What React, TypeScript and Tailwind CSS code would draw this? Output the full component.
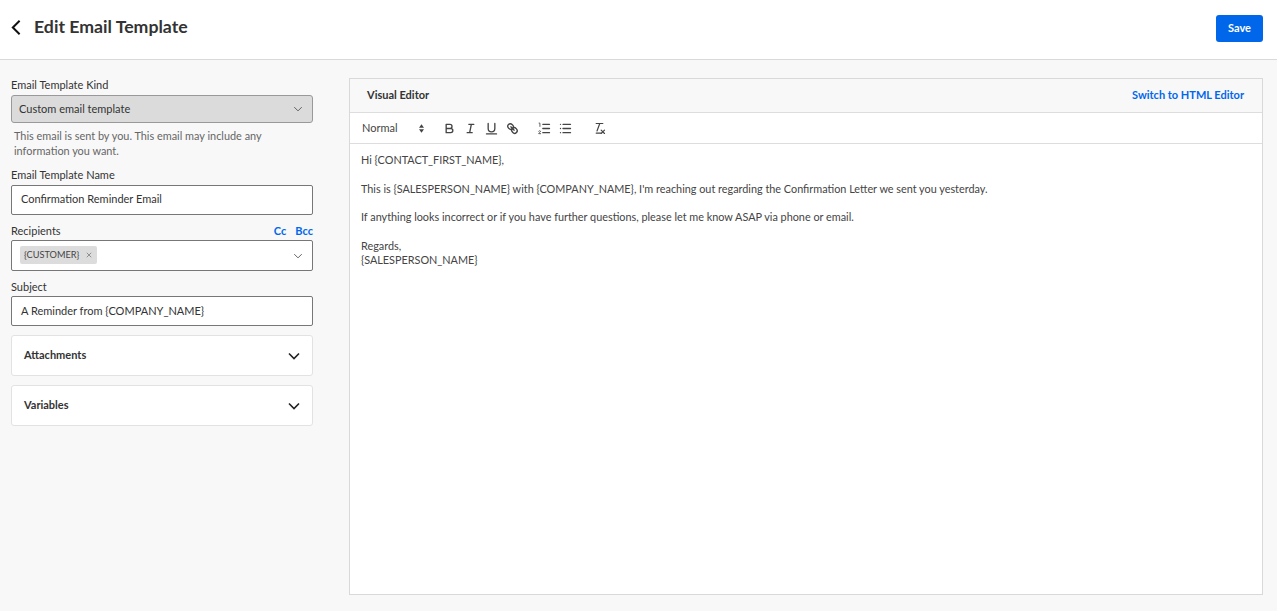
import React from "react";

function Caret({ className }: { className: string }) {
  return (
    <svg viewBox="0 0 12 8" fill="none" stroke="currentColor" className={className}>
      <path d="M1 1.5l5 5 5-5" />
    </svg>
  );
}

function Collapse({ label }: { label: string }) {
  return (
    <div className="flex h-[41px] items-center justify-between rounded-[3px] border border-[#e2e2e2] bg-white pl-[12px] pr-[12px]">
      <span className="pb-[1px] text-[11px] font-bold text-[#333]">{label}</span>
      <Caret className="h-[8px] w-[12px] stroke-[1.6] text-[#222]" />
    </div>
  );
}

// toolbar icons, 18 unit grid
function Tool({ className, children }: { className: string; children: React.ReactNode }) {
  return (
    <svg viewBox="0 0 18 18" fill="none" stroke="#444" strokeWidth="1.6" strokeLinecap="round" strokeLinejoin="round" className={className}>
      {children}
    </svg>
  );
}

function Toolbar() {
  return (
    <div className="flex h-[31px] items-center border-b border-[#ddd] pl-[12px]">
      <span className="w-[57px] text-[11px] text-[#444]">Normal</span>
      <svg viewBox="0 0 6 10" className="h-[9px] w-[5px] fill-[#444]">
        <path d="M3 0l3 4H0zM3 10L0 6h6z" />
      </svg>
      <Tool className="ml-[18px] h-[15px] w-[15px]">
        <path d="M5 4h4.5a2.5 2.5 0 0 1 0 5H5zM5 9h5.5a2.5 2.5 0 0 1 0 5H5z" />
      </Tool>
      <Tool className="ml-[6px] h-[15px] w-[15px]">
        <path d="M7 4h6M5 14h6M8 14l2-10" />
      </Tool>
      <Tool className="ml-[6px] h-[15px] w-[15px]">
        <path d="M5 3v6a4 4 0 0 0 4 4 4 4 0 0 0 4-4V3M3 15.5h12" />
      </Tool>
      <Tool className="ml-[6px] h-[15px] w-[15px]">
        <path d="M7 7l4 4" />
        <path d="M8.9 4.58a3.48 3.48 0 0 1 .36 4.68 3.48 3.48 0 0 1-4.68-.36C3.19 7.5 2.04 6.4 4.22 4.22S7.5 3.19 8.9 4.58z" />
        <path d="M13.42 9.1a3.48 3.48 0 0 0-4.68-.36 3.48 3.48 0 0 0 .36 4.68c1.39 1.39 2.5 2.54 4.68.36s1.03-3.28-.36-4.68z" />
      </Tool>
      <Tool className="ml-[17px] h-[15px] w-[15px]">
        <path d="M7 4h8M7 9h8M7 14h8" />
        <path d="M2.5 2.5H3.5V6.5M2 12.2c.4-.8 2.4-.8 2.2.5-.1.7-2.2 1.6-2.2 2.5h2.4" strokeWidth="1" />
      </Tool>
      <Tool className="ml-[6px] h-[15px] w-[15px]">
        <path d="M6 4h9M6 9h9M6 14h9M3 4h.01M3 9h.01M3 14h.01" />
      </Tool>
      <Tool className="ml-[19px] h-[15px] w-[15px]">
        <path d="M5 3h8M6 12L9.35 3M11 11l4 4M15 11l-4 4M5 14.5h6" strokeWidth="1.4" />
      </Tool>
    </div>
  );
}

export default function App() {
  return (
    <div className="flex h-[611px] flex-col bg-[#f8f8f8] font-['Lato',sans-serif]">
      <header className="flex h-[60px] flex-none items-center justify-between border-b border-[#d9d9d9] bg-white pl-[11px] pr-[14px]">
        <div className="mb-[4px] flex items-center">
          <svg viewBox="0 0 11 18" fill="none" stroke="#111" strokeWidth="2.2" className="h-[17px] w-[10px]">
            <path d="M9.5 1.5L2 9l7.5 7.5" />
          </svg>
          <h1 className="ml-[13px] text-[17.7px] font-bold text-[#333]">Edit Email Template</h1>
        </div>
        <button className="mb-[2px] h-[27px] w-[47px] rounded-[3px] bg-[#0067ea] text-[11px] font-bold text-white">Save</button>
      </header>
      <div className="flex min-h-0 flex-1 pl-[11px] pr-[14px] pt-[18px]">
        <aside className="w-[302px] flex-none">
          <div className="h-[17px] text-[11px] leading-[14px] text-[#333]">Email Template Kind</div>
          <div className="flex h-[28px] items-center justify-between rounded-[3px] border border-[#999] bg-[#dbdbdb] pl-[7px] pr-[9px] text-[11px] text-[#333]">
            Custom email template
            <Caret className="h-[6px] w-[10px] stroke-[1.2] text-[#555]" />
          </div>
          <p className="ml-[3px] mt-[5px] h-[37px] w-[270px] text-[10.9px] leading-[15px] text-[#666]">
            This email is sent by you. This email may include any information you want.
          </p>
          <div className="h-[20px] text-[11px] leading-[19px] text-[#333]">Email Template Name</div>
          <div className="flex h-[30px] items-center rounded-[2px] border border-[#777] bg-white pb-[1px] pl-[9px] text-[11px] text-[#333]">Confirmation Reminder Email</div>
          <div className="mt-[5px] flex h-[20px] items-center justify-between pt-[3px] text-[11px]">
            <span className="text-[#333]">Recipients</span>
            <span className="flex gap-[9px] font-bold text-[#0067ea]">
              <span>Cc</span>
              <span>Bcc</span>
            </span>
          </div>
          <div className="flex h-[31px] items-center justify-between rounded-[2px] border border-[#777] bg-white pl-[8px] pr-[9px]">
            <span className="mb-[1px] flex h-[18px] items-center rounded-[2px] bg-[#dcdcdc] pl-[4px] pr-[5px] text-[9.2px] text-[#444]">
              {"{CUSTOMER}"}
              <svg viewBox="0 0 8 8" stroke="#777" className="ml-[7px] h-[6px] w-[6px]">
                <path d="M1 1l6 6M7 1L1 7" />
              </svg>
            </span>
            <Caret className="h-[6px] w-[10px] stroke-[1.2] text-[#555]" />
          </div>
          <div className="mt-[5px] h-[20px] pt-[1px] text-[11px] leading-[20px] text-[#333]">Subject</div>
          <div className="flex h-[30px] items-center rounded-[2px] border border-[#777] bg-white pl-[9px] text-[11px] text-[#333]">{"A Reminder from {COMPANY_NAME}"}</div>
          <div className="mt-[9px] flex flex-col gap-[9px]">
            <Collapse label="Attachments" />
            <Collapse label="Variables" />
          </div>
        </aside>
        <main className="ml-[36px] flex h-[517px] min-w-0 flex-1 flex-col border border-[#d9d9d9] bg-white">
          <div className="flex h-[34px] flex-none items-center justify-between border-b border-[#ddd] bg-[#f8f8f8] pl-[17px] pr-[18px] text-[11px] font-bold">
            <span className="text-[#333]">Visual Editor</span>
            <span className="text-[#0067ea]">Switch to HTML Editor</span>
          </div>
          <Toolbar />
          <div className="pl-[11px] pt-[9px] text-[10.85px] leading-[14.3px] text-[#444]">
            <p>{"Hi {CONTACT_FIRST_NAME},"}</p>
            <p className="mt-[14.3px]">{"This is {SALESPERSON_NAME} with {COMPANY_NAME}, I'm reaching out regarding the Confirmation Letter we sent you yesterday."}</p>
            <p className="mt-[14.3px]">If anything looks incorrect or if you have further questions, please let me know ASAP via phone or email.</p>
            <p className="mt-[14.3px]">Regards,</p>
            <p>{"{SALESPERSON_NAME}"}</p>
          </div>
        </main>
      </div>
    </div>
  );
}
